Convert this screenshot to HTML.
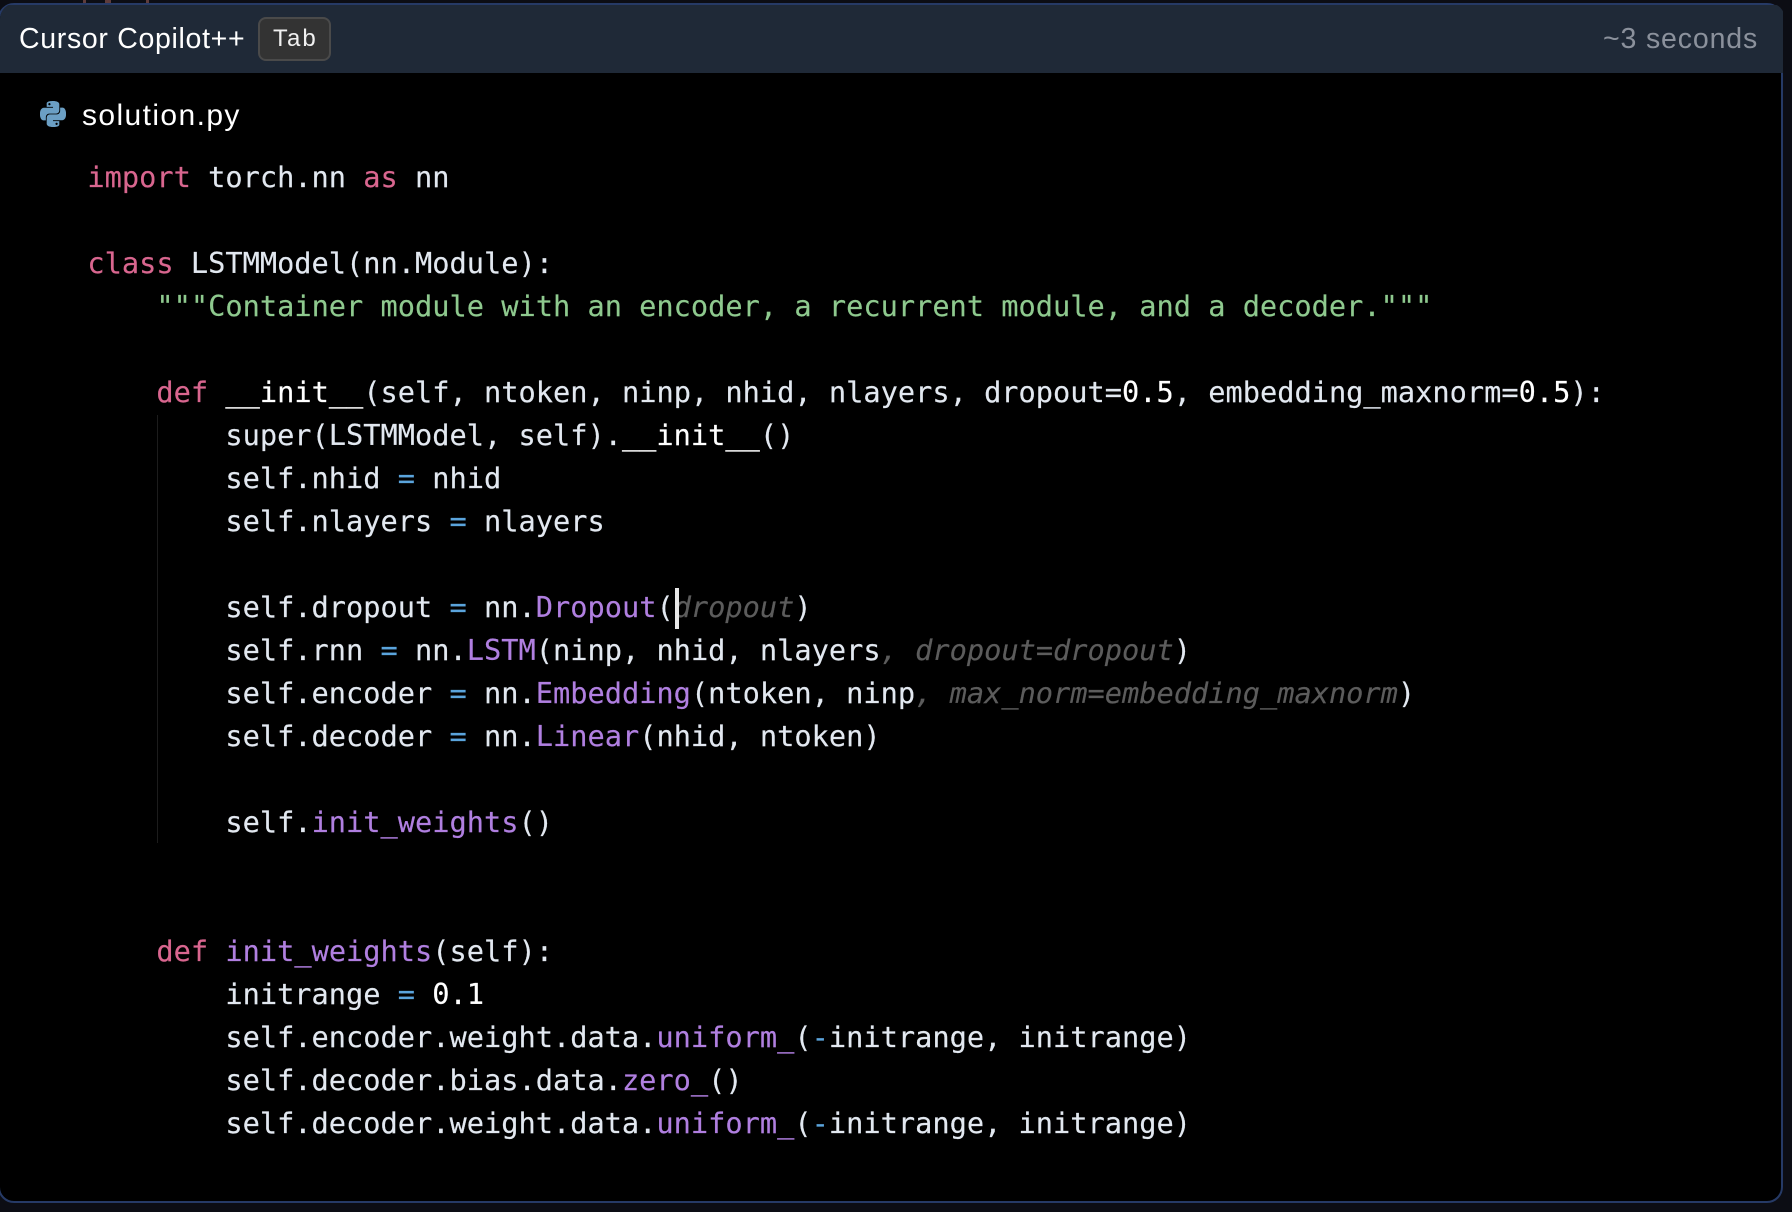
<!DOCTYPE html>
<html><head><meta charset="utf-8"><style>
html,body{margin:0;padding:0;width:1792px;height:1212px;background:#0c0d14;overflow:hidden}
*{box-sizing:border-box}
#card{position:absolute;left:-2px;top:3px;width:1785px;height:1200px;background:#000;border:2px solid #263a66;border-radius:16px;overflow:hidden}
.s{position:absolute;font-family:"Liberation Sans",sans-serif;white-space:pre}
pre{position:absolute;left:87.4px;top:156px;margin:0;font:28.65px/43px "DejaVu Sans Mono",monospace;color:#e2e8f0;-webkit-text-stroke:.15px currentColor}
.k{color:#d9668f}.f{color:#b07fe0}.o{color:#5ba4dc}.g{color:#8ec98e}.w{color:#fff}
.h{color:#5c5c5c;font-style:italic}
</style></head><body>
<div style="position:absolute;left:83px;top:0;width:3px;height:3px;background:#5e3c3c"></div>
<div style="position:absolute;left:105px;top:0;width:6px;height:3px;background:#5e3c3c"></div>
<div style="position:absolute;left:146px;top:0;width:3px;height:3px;background:#5e3c3c"></div>
<div id="card"></div>
<div style="position:absolute;left:0;top:3px;width:1785px;height:1200px;border-radius:16px;overflow:hidden">
<div style="position:absolute;left:0;top:2px;width:1783px;height:68px;background:#1f2937"></div>
</div>
<div class="s" style="left:19px;top:22px;font-size:28.5px;line-height:34px;letter-spacing:.68px;color:#fff">Cursor Copilot++</div>
<div style="position:absolute;left:258px;top:17px;width:73px;height:44px;background:#333;border:2px solid #4a4a4a;border-radius:8px"></div>
<div class="s" style="left:273px;top:24px;font-size:24px;line-height:30px;letter-spacing:2px;color:#f0f0f0">Tab</div>
<div class="s" style="left:1603px;top:22px;font-size:28.5px;line-height:34px;letter-spacing:.85px;color:#8b919c">~3 seconds</div>
<svg style="position:absolute;left:40px;top:101px" width="26" height="26" viewBox="0 0 24 24"><path fill="#6b9fc4" d="M14.25.18l.9.2.73.26.59.3.45.32.34.34.25.34.16.33.1.3.04.26.02.2-.01.13V8.5l-.05.63-.13.55-.21.46-.26.38-.3.31-.33.25-.35.19-.35.14-.33.1-.3.07-.26.04-.21.02H8.77l-.69.05-.59.14-.5.22-.41.27-.33.32-.27.35-.2.36-.15.37-.1.35-.07.32-.04.27-.02.21v3.06H3.17l-.21-.03-.28-.07-.32-.12-.35-.18-.36-.26-.36-.36-.35-.46-.32-.59-.28-.73-.21-.88-.14-1.05-.05-1.23.06-1.22.16-1.04.24-.87.32-.71.36-.57.4-.44.42-.33.42-.24.4-.16.36-.1.32-.05.24-.01h.16l.06.01h8.16v-.83H6.18l-.01-2.75-.02-.37.05-.34.11-.31.17-.28.25-.26.31-.23.38-.2.44-.18.51-.15.58-.12.64-.1.71-.06.77-.04.84-.02 1.27.05zm-6.3 1.98l-.23.33-.08.41.08.41.23.34.33.22.41.09.41-.09.33-.22.23-.34.08-.41-.08-.41-.23-.33-.33-.22-.41-.09-.41.09zm13.09 3.95l.28.06.32.12.35.18.36.27.36.35.35.47.32.59.28.73.21.88.14 1.04.05 1.23-.06 1.23-.16 1.04-.24.86-.32.71-.36.57-.4.45-.42.33-.42.24-.4.16-.36.09-.32.05-.24.02-.16-.01h-8.22v.82h5.84l.01 2.76.02.36-.05.34-.11.31-.17.29-.25.25-.31.24-.38.2-.44.17-.51.15-.58.13-.64.09-.71.07-.77.04-.84.01-1.27-.04-1.07-.14-.9-.2-.73-.25-.59-.3-.45-.33-.34-.34-.25-.34-.16-.33-.1-.3-.04-.25-.02-.2.01-.13v-5.34l.05-.64.13-.54.21-.46.26-.38.3-.32.33-.24.35-.2.35-.14.33-.1.3-.06.26-.04.21-.02.13-.01h5.84l.69-.05.59-.14.5-.21.41-.28.33-.32.27-.35.2-.36.15-.36.1-.35.07-.32.04-.28.02-.21V6.07h2.09l.14.01zm-6.47 14.25l-.23.33-.08.41.08.41.23.33.33.23.41.08.41-.08.33-.23.23-.33.08-.41-.08-.41-.23-.33-.33-.23-.41-.08-.41.08z"/></svg>
<div class="s" style="left:82px;top:98px;font-size:30px;line-height:36px;letter-spacing:1.4px;color:#fff">solution.py</div>
<div style="position:absolute;left:157px;top:415px;width:1px;height:428px;background:#1c1c1c"></div>
<pre><span class="k">import</span> torch.nn <span class="k">as</span> nn

<span class="k">class</span> LSTMModel(nn.Module):
    <span class="g">"""Container module with an encoder, a recurrent module, and a decoder."""</span>

    <span class="k">def</span> <span class="w">__init__</span>(self, ntoken, ninp, nhid, nlayers, dropout=<span class="w">0.5</span>, embedding_maxnorm=<span class="w">0.5</span>):
        super(LSTMModel, self).<span class="w">__init__</span>()
        self.nhid <span class="o">=</span> nhid
        self.nlayers <span class="o">=</span> nlayers

        self.dropout <span class="o">=</span> nn.<span class="f">Dropout</span>(<span class="h">dropout</span>)
        self.rnn <span class="o">=</span> nn.<span class="f">LSTM</span>(ninp, nhid, nlayers<span class="h">, dropout=dropout</span>)
        self.encoder <span class="o">=</span> nn.<span class="f">Embedding</span>(ntoken, ninp<span class="h">, max_norm=embedding_maxnorm</span>)
        self.decoder <span class="o">=</span> nn.<span class="f">Linear</span>(nhid, ntoken)

        self.<span class="f">init_weights</span>()


    <span class="k">def</span> <span class="f">init_weights</span>(self):
        initrange <span class="o">=</span> <span class="w">0.1</span>
        self.encoder.weight.data.<span class="f">uniform_</span>(<span class="o">-</span>initrange, initrange)
        self.decoder.bias.data.<span class="f">zero_</span>()
        self.decoder.weight.data.<span class="f">uniform_</span>(<span class="o">-</span>initrange, initrange)
</pre>
<div style="position:absolute;left:675px;top:588px;width:4px;height:41px;background:#e8e8e8"></div>
</body></html>
